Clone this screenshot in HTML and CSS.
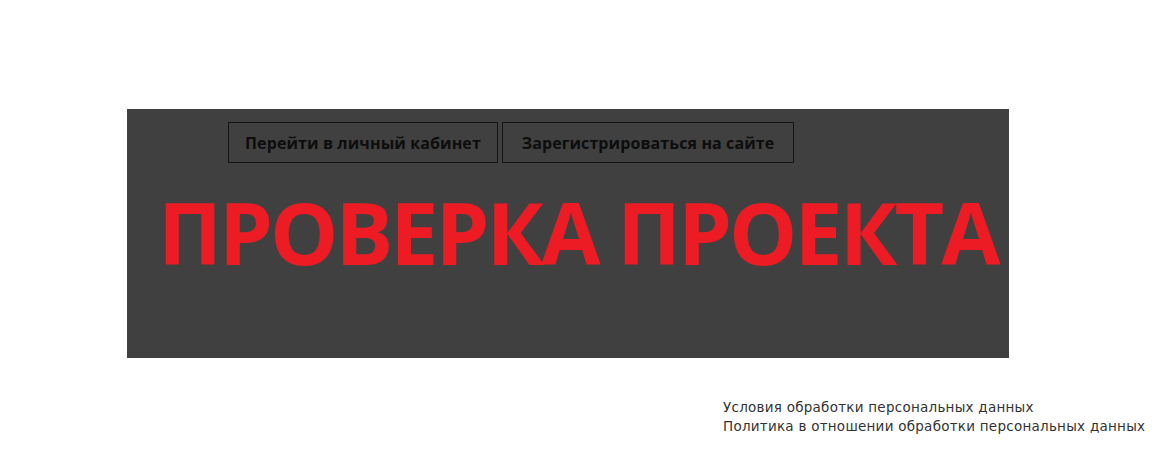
FILE: index.html
```html
<!DOCTYPE html>
<html lang="ru">
<head>
<meta charset="utf-8">
<title>Проверка проекта</title>
<link rel="stylesheet" href="styles.css">
</head>
<body>
<div class="page">
  <section class="banner">
    <div class="buttons">
      <a class="btn btn-first" href="#">Перейти в личный кабинет</a>
      <a class="btn btn-second" href="#">Зарегистрироваться на сайте</a>
    </div>
    <h1 class="title">ПРОВЕРКА ПРОЕКТА</h1>
  </section>
  <footer class="footer">
    <a class="footer-link" href="#">Условия обработки персональных данных</a>
    <a class="footer-link" href="#">Политика в отношении обработки персональных данных</a>
  </footer>
</div>
</body>
</html>
```
FILE: styles.css
```css
html, body {
  margin: 0;
  padding: 0;
  background: #ffffff;
}
.page {
  width: 1176px;
  height: 458px;
  padding-top: 109px;
  box-sizing: border-box;
  display: flex;
  flex-direction: column;
}
.banner {
  margin-left: 127px;
  width: 882px;
  height: 249px;
  background: #404040;
  box-sizing: border-box;
  padding-top: 13px;
  display: flex;
  flex-direction: column;
}
.buttons {
  display: flex;
  gap: 4px;
  margin-left: 101px;
}
.btn {
  display: flex;
  align-items: center;
  justify-content: center;
  height: 41px;
  box-sizing: border-box;
  border: 1px solid #141414;
  color: #0d0d0d;
  font-family: "Open Sans", sans-serif;
  font-weight: 700;
  font-size: 16px;
  letter-spacing: 0.1px;
  text-decoration: none;
}
.btn-first { width: 270px; }
.btn-second { width: 292px; }
.title {
  margin: 19px 0 0 31px;
  font-family: "Open Sans", sans-serif;
  font-weight: 700;
  font-size: 86px;
  line-height: 100px;
  color: #ed1c24;
  letter-spacing: -3px;
  white-space: nowrap;
}
.footer {
  margin-top: 40px;
  margin-left: 723px;
  display: flex;
  flex-direction: column;
}
.footer-link {
  font-family: "DejaVu Sans", sans-serif;
  font-size: 13.5px;
  line-height: 19px;
  letter-spacing: 0.25px;
  color: #333333;
  text-decoration: none;
  white-space: nowrap;
}
```
